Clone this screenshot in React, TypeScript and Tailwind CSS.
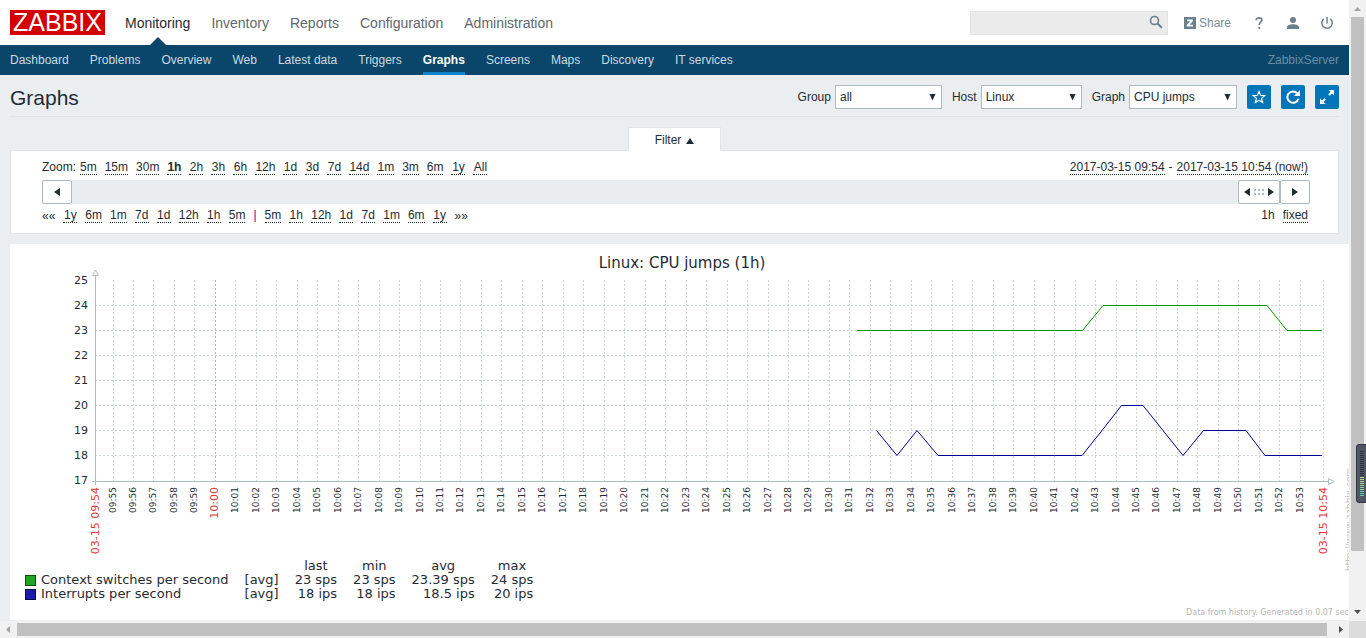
import React from 'react';

const MAIN_MENU = ['Monitoring', 'Inventory', 'Reports', 'Configuration', 'Administration'];

const SUB_MENU = [
    'Dashboard', 'Problems', 'Overview', 'Web', 'Latest data', 'Triggers',
    'Graphs', 'Screens', 'Maps', 'Discovery', 'IT services',
];

const ZOOM_LEVELS = ['5m', '15m', '30m', '1h', '2h', '3h', '6h', '12h', '1d', '3d', '7d', '14d', '1m', '3m', '6m', '1y', 'All'];
const STEPS_BACK = ['1y', '6m', '1m', '7d', '1d', '12h', '1h', '5m'];
const STEPS_FORWARD = ['5m', '1h', '12h', '1d', '7d', '1m', '6m', '1y'];

const LEGEND = [
    { name: 'Context switches per second', swatch: 'bg-[#1fa51f] border-[#0b4f0b]', last: '23 sps', min: '23 sps', avg: '23.39 sps', max: '24 sps' },
    { name: 'Interrupts per second', swatch: 'bg-[#1c1ca5] border-[#0a0a50]', last: '18 ips', min: '18 ips', avg: '18.5 ips', max: '20 ips' },
];

// Chart geometry
const LEFT = 85;
const RIGHT = 1313;
const TOP = 36;
const BOTTOM = 237;
const ROW = 25;
const MINUTE = 20.47;
const FIRST_MINUTE = 103;

const pad = (n: number) => String(n).padStart(2, '0');

// 09:55 ... 10:53
const MINUTES = Array.from({ length: 59 }, (_, i) => {
    const total = 9 * 60 + 55 + i;
    return {
        label: `${pad(Math.floor(total / 60))}:${pad(total % 60)}`,
        x: Math.floor(FIRST_MINUTE + i * MINUTE),
        full: total % 60 === 0,
    };
});

const DottedButton = ({ label, active }: { label: string, active?: boolean }) => (
    <button type="button" className={`h-[15px] min-w-[14px] border-b border-dotted border-[#1f2c33] leading-[14px] ${active ? 'font-bold' : ''}`}>
        {label}
    </button>
);

const FilterSelect = ({ id, label, value, width }: { id: string, label: string, value: string, width: string }) => (
    <div className="flex items-center gap-1">
        <label htmlFor={id}>{label}</label>
        <div className={`relative ${width}`}>
            <select id={id} defaultValue={value} className="block h-6 w-full appearance-none border border-[#acbbc2] bg-white pl-1 text-xs text-[#1f2c33]">
                <option>{value}</option>
            </select>
            <svg className="pointer-events-none absolute right-[6px] top-2 h-2 w-[7px]" viewBox="0 0 7 8">
                <path d="M0.500 1h6L3.500 7.500z" fill="#1f2c33" />
            </svg>
        </div>
    </div>
);

const IconButton = ({ title, children }: { title: string, children: React.ReactNode }) => (
    <button type="button" aria-label={title} className="flex h-6 w-6 items-center justify-center rounded-xs bg-[#0275b8] text-white">
        {children}
    </button>
);

const Header = () => (
    <header className="flex h-[45px] shrink-0 items-center justify-between bg-white pl-[10px] pr-4">
        <div className="flex items-center gap-5">
            <a href="#" className="flex h-[25px] w-[95px] items-center justify-center bg-[#d40000] text-[25px] leading-none text-white">ZABBIX</a>
            <nav className="flex h-[45px] gap-[21px] text-sm">
                {MAIN_MENU.map((item, i) => (
                    <a key={item} href="#" className={`relative flex items-center ${i === 0 ? 'text-[#1f2c33]' : 'text-[#5d676e]'}`}>
                        {item}
                        {i === 0 && (
                            <svg className="absolute bottom-0 left-1/2 h-2 w-4 -translate-x-1/2" viewBox="0 0 16 8">
                                <path d="M0 8L8 0l8 8z" fill="#0a466a" />
                            </svg>
                        )}
                    </a>
                ))}
            </nav>
        </div>
        <div className="flex items-center text-[#768d99]">
            <div className="relative mr-4 w-[198px]">
                <input type="text" aria-label="Search" className="block h-6 w-full border border-[#e2e5e6] bg-[#ebebeb] px-1 text-xs" />
                <svg className="absolute right-[5px] top-1 h-[14px] w-[14px]" viewBox="0 0 14 14" fill="none" stroke="#6b818d">
                    <circle cx="5.5" cy="5.5" r="4" strokeWidth="1.6" />
                    <path d="M8.5 8.5l4.300 4.300" strokeWidth="2" />
                </svg>
            </div>
            <a href="#" className="mr-6 flex items-center gap-[3px] text-xs">
                <svg className="h-3 w-3" viewBox="0 0 12 12">
                    <path d="M0 0h12v12H0z" fill="#6b818d" />
                    <path d="M3 2.500h6v1.600L5.600 7.800H9v1.700H2.800V8L6.300 4.200H3z" fill="#fff" />
                </svg>
                Share
            </a>
            <a href="#" aria-label="Help" className="mr-6 flex">
                <svg className="h-3 w-2" viewBox="0 0 8 12" fill="none" stroke="#6b818d" strokeWidth="1.8">
                    <path d="M1.200 3.200C1.200 0.200 6.800 0.200 6.800 3.200C6.800 5.200 4.200 5.200 4.200 8" />
                    <path d="M3.300 10.900h1.900" strokeWidth="2" />
                </svg>
            </a>
            <a href="#" aria-label="Profile" className="mr-[22px] flex">
                <svg className="h-3 w-3" viewBox="0 0 12 12" fill="#6b818d">
                    <circle cx="6" cy="3" r="3" />
                    <path d="M0 12V10.300C0 8.200 3 7.300 6 7.300s6 0.900 6 3V12z" />
                </svg>
            </a>
            <a href="#" aria-label="Sign out" className="flex">
                <svg className="h-3 w-3" viewBox="0 0 12 12" fill="none" stroke="#6b818d" strokeWidth="1.5">
                    <path d="M6 0v6.500M2.600 1.900a5.250 5.250 0 1 0 6.800 0" />
                </svg>
            </a>
        </div>
    </header>
);

const SubMenu = () => (
    <div className="flex h-[30px] shrink-0 items-stretch justify-between bg-[#0a466a] px-[10px]">
        <nav className="flex gap-[21px]">
            {SUB_MENU.map((item) => (
                <a
                    key={item}
                    href="#"
                    className={`flex items-center border-b-[3px] pt-[3px] ${item === 'Graphs' ? 'border-[#0f84cc] font-bold text-white' : 'border-transparent text-[#ccd9e0]'}`}
                >
                    {item}
                </a>
            ))}
        </nav>
        <span className="flex items-center text-[#6b8ea1]">ZabbixServer</span>
    </div>
);

const TimeFilter = () => (
    <section className="mx-[10px] mt-[10px] shrink-0">
        <div className="flex justify-center">
            <button type="button" className="relative z-10 -mb-px flex h-6 w-[93px] items-center justify-center gap-[5px] border border-b-0 border-[#dfe4e7] bg-white">
                Filter
                <svg className="h-2 w-2" viewBox="0 0 8 8">
                    <path d="M0 8h8L4 2z" fill="#1f2c33" />
                </svg>
            </button>
        </div>
        <div className="border border-[#dfe4e7] bg-white pb-[10px] pl-[31px] pr-7 pt-[9px]">
            <div className="flex h-5 items-start justify-between">
                <div className="flex gap-2 leading-[14px]">
                    <span className="-mr-1">Zoom:</span>
                    {ZOOM_LEVELS.map((z) => <DottedButton key={z} label={z} active={z === '1h'} />)}
                </div>
                <div className="flex gap-1 pr-[2px] leading-[14px]">
                    <DottedButton label="2017-03-15 09:54" />
                    <span>-</span>
                    <DottedButton label="2017-03-15 10:54 (now!)" />
                </div>
            </div>
            <div className="flex h-6 bg-[#e9edef]">
                <button type="button" aria-label="Back" className="flex w-[30px] items-center justify-center rounded-xs border border-[#acbbc2] bg-white">
                    <svg className="h-2 w-2" viewBox="0 0 8 8"><path d="M7 0v8L1 4z" fill="#1f2c33" /></svg>
                </button>
                <div className="flex-1" />
                <button type="button" aria-label="Period" className="flex w-[42px] items-center justify-center rounded-xs border border-[#acbbc2] bg-white">
                    <svg className="h-2 w-[30px]" viewBox="0 0 30 8">
                        <path d="M6 0v8L0 4zM24 0v8l6-4z" fill="#1f2c33" />
                        <path d="M10 1h2v2h-2zM14 1h2v2h-2zM18 1h2v2h-2zM10 5h2v2h-2zM14 5h2v2h-2zM18 5h2v2h-2z" fill="#acbbc2" />
                    </svg>
                </button>
                <button type="button" aria-label="Forward" className="flex w-[30px] items-center justify-center rounded-xs border border-[#acbbc2] bg-white">
                    <svg className="h-2 w-2" viewBox="0 0 8 8"><path d="M1 0v8l6-4z" fill="#1f2c33" /></svg>
                </button>
            </div>
            <div className="mt-1 flex items-start justify-between leading-[14px]">
                <div className="flex gap-2">
                    <button type="button" className="h-[15px]">««</button>
                    {STEPS_BACK.map((s) => <DottedButton key={s} label={s} />)}
                    <span className="text-[#870087]">|</span>
                    {STEPS_FORWARD.map((s) => <DottedButton key={s} label={s} />)}
                    <button type="button" className="h-[15px]">»»</button>
                </div>
                <div className="flex gap-2 pr-[2px]">
                    <span>1h</span>
                    <DottedButton label="fixed" />
                </div>
            </div>
        </div>
    </section>
);

const Chart = () => (
    <svg className="block h-auto w-full shrink-0 overflow-visible font-['DejaVu_Sans']" viewBox="0 0 1339 315" fill="#1f2c33">
        <text x="672" y="24" textAnchor="middle" fontSize="15">Linux: CPU jumps (1h)</text>

        <g stroke="#ccd5da" strokeDasharray="2 2" shapeRendering="crispEdges">
            {[1, 2, 3, 4, 5, 6, 7].map((i) => (
                <path key={i} d={`M${LEFT} ${TOP + i * ROW + 0.5}H${RIGHT}`} />
            ))}
            {MINUTES.map((m) => (
                <path key={m.label} d={`M${m.x + 0.5} ${TOP}V${BOTTOM}`} stroke={m.full ? '#acb6bc' : '#ccd5da'} />
            ))}
            <path d={`M${RIGHT + 0.5} ${TOP}V${BOTTOM}`} />
        </g>

        {/* Axes */}
        <g stroke="#acbbc2" fill="none">
            <path d="M85.5 32V241M82 237.5H1318" shapeRendering="crispEdges" />
            <path d="M82.5 31.5h6l-3-5.5zM1318.5 234.5v6l5.500-3z" fill="#fff" />
        </g>

        {[25, 24, 23, 22, 21, 20, 19, 18, 17].map((v, i) => (
            <text key={v} x="78" y={TOP + 4 + i * ROW} textAnchor="end" fontSize="11">{v}</text>
        ))}

        {MINUTES.map((m) => (
            <text
                key={m.label}
                transform={`translate(${m.x + 3} 243) rotate(-90)`}
                textAnchor="end"
                fontSize={m.full ? 11 : 9}
                fill={m.full ? '#e33734' : '#1f2c33'}
            >
                {m.label}
            </text>
        ))}
        <text transform="translate(89 243) rotate(-90)" textAnchor="end" fontSize="11" fill="#e33734">03-15 09:54</text>
        <text transform="translate(1317 243) rotate(-90)" textAnchor="end" fontSize="11" fill="#e33734">03-15 10:54</text>

        <g fill="none" strokeWidth="1">
            <path stroke="#009900" d="M847 86.500H1072.500L1093 61.500H1257L1277 86.500H1312" />
            <path stroke="#000099" d="M866.500 186.500L887 211.500L907 186.500L928 211.500H1072L1092 186.500L1111.500 161.500H1133L1153 186.500L1173 211.500L1193.500 186.500H1236L1255 211.500H1312" />
        </g>

        <text transform="translate(1342 327) rotate(-90)" fontSize="9" fill="#bfbfbf">http://www.zabbix.com</text>
    </svg>
);

const Legend = () => (
    <table className="ml-[15px] self-start font-['DejaVu_Sans'] text-[13px] leading-[14px]">
        <thead>
            <tr>
                <th /><th />
                {['last', 'min', 'avg', 'max'].map((h) => <th key={h} className="p-0 pl-4 text-center font-normal">{h}</th>)}
            </tr>
        </thead>
        <tbody>
            {LEGEND.map((row) => (
                <tr key={row.name}>
                    <td className="p-0">
                        <div className="flex items-center gap-[5px]">
                            <span className={`h-[11px] w-[11px] border ${row.swatch}`} />
                            {row.name}
                        </div>
                    </td>
                    <td className="p-0 pl-4">[avg]</td>
                    {[row.last, row.min, row.avg, row.max].map((v, i) => <td key={i} className="p-0 pl-4 text-right">{v}</td>)}
                </tr>
            ))}
        </tbody>
    </table>
);

const VerticalScrollbar = () => (
    <div className="flex w-[17px] shrink-0 flex-col items-center bg-[#f1f1f1]">
        <svg className="h-[17px] w-[17px] shrink-0" viewBox="0 0 17 17"><path d="M5 11h7L8.500 7z" fill="#a3a3a3" /></svg>
        <div className="h-[86%] w-[13px] bg-[#c1c1c1]" />
        <svg className="mt-auto h-[17px] w-[17px] shrink-0" viewBox="0 0 17 17"><path d="M5 6h7L8.500 10z" fill="#505050" /></svg>
    </div>
);

const HorizontalScrollbar = () => (
    <div className="flex h-[17px] shrink-0 items-center bg-[#f1f1f1]">
        <svg className="h-[17px] w-[17px] shrink-0" viewBox="0 0 17 17"><path d="M10 5v7L6 8.500z" fill="#a3a3a3" /></svg>
        <div className="h-[13px] flex-1 bg-[#c1c1c1]" />
        <svg className="ml-[5px] h-[17px] w-[17px] shrink-0" viewBox="0 0 17 17"><path d="M7 5v7l4-3.500z" fill="#505050" /></svg>
        <div className="h-full w-[17px] shrink-0 bg-[#dcdcdc]" />
    </div>
);

// Level meter docked to the right edge of the window
const LevelMeter = () => (
    <svg className="absolute right-0 top-[444px] h-[59px] w-[10px]" viewBox="0 0 10 59">
        <path d="M10.500 0.500H3Q0.500 0.500 0.500 3V56Q0.500 58.500 3 58.500H10.500z" fill="#505564" stroke="#30333d" />
        {Array.from({ length: 23 }, (_, i) => (
            <path key={i} d={`M4 ${7.5 + i * 2}h4`} stroke={i < 13 ? '#2f323c' : i < 17 ? '#b4d98a' : i < 20 ? '#94d8a0' : '#62d3b9'} />
        ))}
    </svg>
);

export default function App() {
    return (
        <div className="relative flex h-screen flex-col overflow-hidden bg-[#ebeef0] font-['Liberation_Sans',Arial,sans-serif] text-xs text-[#1f2c33]">
            <div className="flex min-h-0 flex-1">
                <main className="flex min-w-0 flex-1 flex-col overflow-hidden">
                    <Header />
                    <SubMenu />
                    <div className="mx-[10px] flex h-[42px] shrink-0 items-start justify-between border-b border-[#dfe4e7] pt-[10px]">
                        <h1 className="text-[21px] leading-[26px]">Graphs</h1>
                        <div className="flex gap-[10px]">
                            <FilterSelect id="group" label="Group" value="all" width="w-[107px]" />
                            <FilterSelect id="host" label="Host" value="Linux" width="w-[101px]" />
                            <FilterSelect id="graph" label="Graph" value="CPU jumps" width="w-[108px]" />
                            <IconButton title="Add to favourites">
                                <svg className="h-[14px] w-[14px]" viewBox="0 0 14 14" fill="none" stroke="currentColor" strokeWidth="1.2">
                                    <path d="M7 1.500L8.600 5.300L12.800 5.600L9.600 8.300L10.600 12.500L7 10.200L3.400 12.500L4.400 8.300L1.200 5.600L5.400 5.300z" />
                                </svg>
                            </IconButton>
                            <IconButton title="Reset">
                                <svg className="h-[14px] w-[14px]" viewBox="0 0 14 14" fill="none" stroke="currentColor" strokeWidth="2">
                                    <path d="M11.300 3.300A5.700 5.700 0 1 0 12.500 8.800" />
                                    <path d="M14 0v6H8z" fill="currentColor" stroke="none" />
                                </svg>
                            </IconButton>
                            <IconButton title="Fullscreen">
                                <svg className="h-[14px] w-[14px]" viewBox="0 0 14 14" fill="currentColor">
                                    <path d="M8.500 0H14v5.500zM0 8.500V14h5.500z" />
                                    <path d="M12 2L8.900 5.100M2 12l3.100-3.100" stroke="currentColor" strokeWidth="2" />
                                </svg>
                            </IconButton>
                        </div>
                    </div>
                    <TimeFilter />
                    <section className="mb-px ml-[10px] mt-[10px] flex min-h-0 flex-1 flex-col overflow-hidden bg-white">
                        <Chart />
                        <Legend />
                        <p className="mt-auto self-end whitespace-nowrap pb-[2px] font-['DejaVu_Sans'] text-[8px] leading-[10px] text-[#b4b4b4]">
                            Data from history. Generated in 0.07 sec
                        </p>
                    </section>
                </main>
                <VerticalScrollbar />
            </div>
            <HorizontalScrollbar />
            <LevelMeter />
        </div>
    );
}
